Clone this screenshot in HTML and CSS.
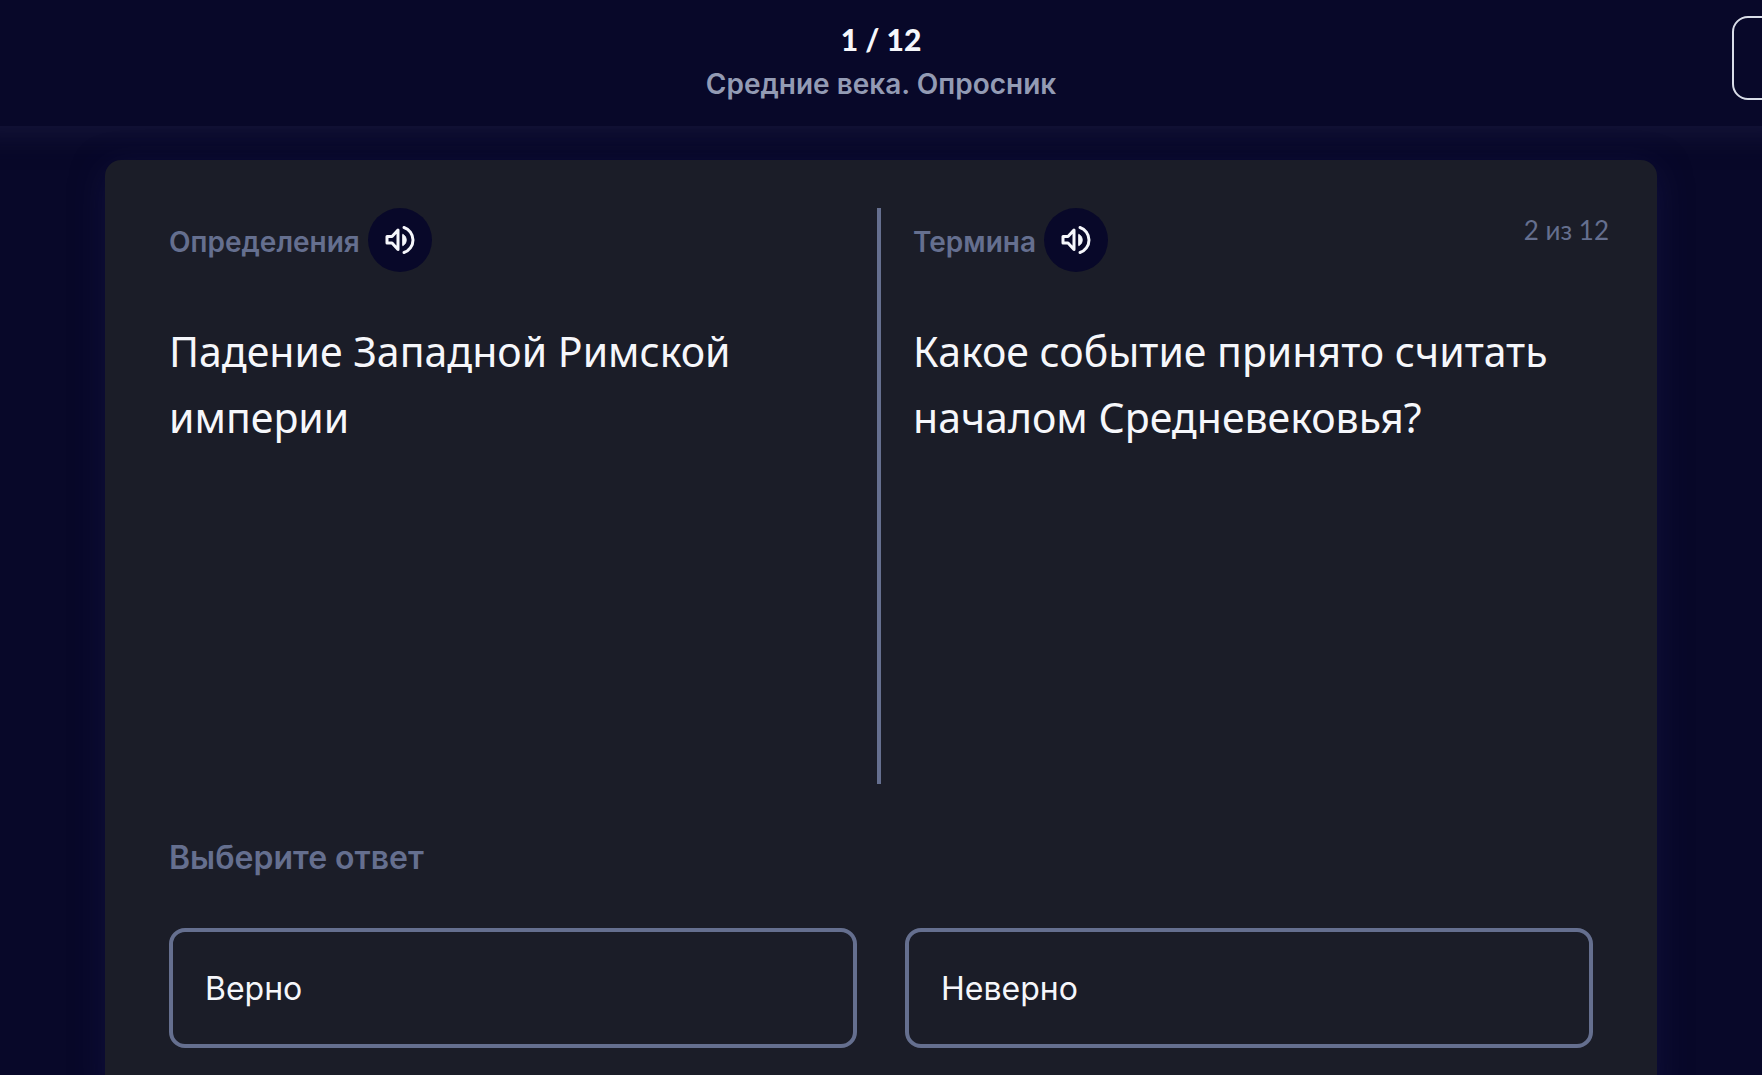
FILE: index.html
```html
<!DOCTYPE html>
<html lang="ru">
<head>
  <meta charset="UTF-8" />
  <meta name="viewport" content="width=device-width, initial-scale=1.0"/>
  <title>Средние века. Опросник</title>
  <link rel="stylesheet" href="styles.css">
</head>
<body>
  <header class="header">
    <div class="header-title">
      <div class="progress">1 / 12</div>
      <h1>Средние века. Опросник</h1>
    </div>
    <button class="close-btn" type="button" aria-label="Закрыть"></button>
  </header>

  <main class="card">
    <div class="question">
      <section class="side">
        <div class="side-header">
          <h2>Определения</h2>
          <button class="audio-btn" type="button" aria-label="Прослушать определение">
            <svg viewBox="0 0 32 32" fill="none" stroke="currentColor" stroke-width="3" stroke-linejoin="round" stroke-linecap="round">
              <path d="M3 12.5h5l6-6.500v19.500l-6-6.500H3z"/>
              <path d="M20 3.500c5 1.500 9 6.500 9 12.500s-4 11-9 12.500"/>
              <path d="M19 10.500c2.200 1 3.200 3.200 3.200 5.500s-1 4.500-3.200 5.500z" fill="currentColor" stroke-width="1"/>
            </svg>
          </button>
        </div>
        <p class="text">Падение Западной Римской империи</p>
      </section>
      <section class="side">
        <div class="side-header">
          <h2>Термина</h2>
          <button class="audio-btn" type="button" aria-label="Прослушать термин">
            <svg viewBox="0 0 32 32" fill="none" stroke="currentColor" stroke-width="3" stroke-linejoin="round" stroke-linecap="round">
              <path d="M3 12.500h5l6-6.500v19.500l-6-6.500H3z"/>
              <path d="M20 3.500c5 1.500 9 6.500 9 12.500s-4 11-9 12.500"/>
              <path d="M19 10.500c2.200 1 3.200 3.200 3.200 5.500s-1 4.500-3.200 5.500z" fill="currentColor" stroke-width="1"/>
            </svg>
          </button>
          <span class="counter">2 из 12</span>
        </div>
        <p class="text">Какое событие принято считать началом Средневековья?</p>
      </section>
    </div>

    <div class="answers">
      <h3>Выберите ответ</h3>
      <div class="options">
        <button class="option" type="button">Верно</button>
        <button class="option" type="button">Неверно</button>
      </div>
    </div>
  </main>
</body>
</html>
```

FILE: styles.css
```css
* {
  box-sizing: border-box;
}
body {
  background-color: #080829;
  color: #f6f7fb;
  font-family: Inter, "Liberation Sans", sans-serif;
  margin: 0;
  min-height: 100vh;
  overflow-x: hidden;
}
h1, h2, h3, p {
  margin: 0;
}
button {
  color: inherit;
  font-family: inherit;
  cursor: pointer;
}
.header {
  display: grid;
  grid-template-columns: 1fr auto 1fr;
  align-items: start;
  padding: 16px 0 20px;
  box-shadow: 0 -16px 24px 24px rgba(24, 24, 60, 0.8);
  background-color: #080829;
}
.header-title {
  grid-column: 2;
  text-align: center;
}
.progress {
  font-family: Lato, sans-serif;
  font-size: 30px;
  font-weight: 900;
  line-height: 46px;
}
.header h1 {
  color: #939bb4;
  font-size: 28px;
  font-weight: 600;
  line-height: 44px;
}
/* runs off the right edge of the window */
.close-btn {
  justify-self: end;
  width: 84px;
  height: 84px;
  margin-right: -54px;
  background: none;
  border: 2px solid #d9dde8;
  border-radius: 16px;
}
.card {
  background-color: #1b1d28;
  border-radius: 16px;
  box-shadow: 0 8px 32px rgba(24, 24, 80, 0.5);
  max-width: 1552px;
  margin: 34px auto 0;
  padding: 48px;
}
.question {
  display: grid;
  grid-template-columns: 1fr 1fr;
  min-height: 576px;
}
.side {
  padding-left: 16px;
}
.side:first-child {
  border-right: 4px solid #656f8f;
}
.side:last-child {
  padding-left: 32px;
}
.side-header {
  display: flex;
  align-items: center;
  gap: 8px;
  height: 64px;
}
.side-header h2 {
  padding-top: 4px;
  color: #656f8f;
  font-size: 28px;
  font-weight: 600;
}
.audio-btn {
  display: flex;
  align-items: center;
  justify-content: center;
  width: 64px;
  height: 64px;
  padding: 0;
  background-color: #080829;
  border: none;
  border-radius: 50%;
}
.audio-btn svg {
  width: 32px;
  height: 32px;
}
.counter {
  align-self: flex-start;
  margin-left: auto;
  color: #656f8f;
  font-family: Lato, sans-serif;
  font-size: 26px;
  line-height: 44px;
}
.text {
  margin-top: 46px;
  font-family: "Noto Sans", sans-serif;
  font-size: 41px;
  line-height: 66px;
}
.answers {
  padding: 52px 16px 0;
}
.answers h3 {
  color: #656f8f;
  font-size: 32px;
  font-weight: 600;
  line-height: 44px;
}
.options {
  display: grid;
  grid-template-columns: 1fr 1fr;
  gap: 48px;
  margin-top: 48px;
}
.option {
  height: 120px;
  padding: 0 32px;
  background: none;
  border: 4px solid #656f8f;
  border-radius: 16px;
  font-size: 32px;
  text-align: left;
}
.option:hover {
  border-color: #939bb4;
}
```
